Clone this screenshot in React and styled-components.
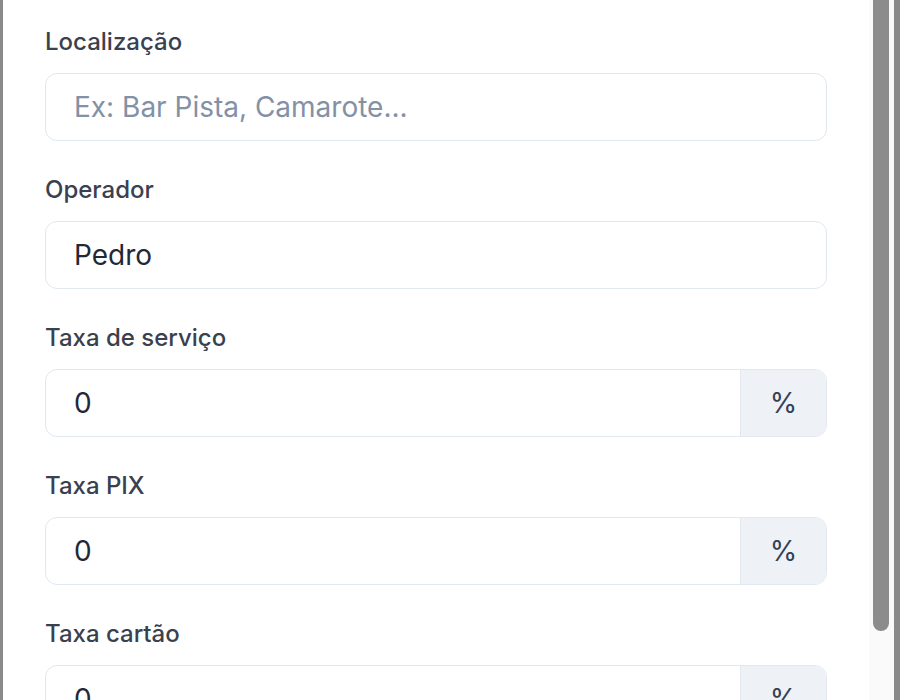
import React from 'react'
import styled, { createGlobalStyle } from 'styled-components'

const GlobalStyle = createGlobalStyle`
  * {
    box-sizing: border-box;
  }

  html,
  body {
    margin: 0;
    height: 100%;
    background: #8a8a8a;
    font-family: Inter, 'Noto Sans', sans-serif;
  }

  #root {
    height: 100%;
  }
`

const fields = [
  { label: 'Localização', placeholder: 'Ex: Bar Pista, Camarote...' },
  { label: 'Operador', value: 'Pedro' },
  { label: 'Taxa de serviço', value: '0', suffix: '%' },
  { label: 'Taxa PIX', value: '0', suffix: '%' },
  { label: 'Taxa cartão', value: '0', suffix: '%' }
]

export default function App() {
  return (
    <>
      <GlobalStyle />
      <Backdrop>
        <Modal>
          <Content>
            <Form onSubmit={(e) => e.preventDefault()}>
              {fields.map((field) => (
                <Field key={field.label}>
                  <Label>{field.label}</Label>
                  <InputGroup>
                    <Input
                      type="text"
                      defaultValue={field.value}
                      placeholder={field.placeholder}
                    />
                    {field.suffix && <Suffix>{field.suffix}</Suffix>}
                  </InputGroup>
                </Field>
              ))}
            </Form>
          </Content>
          {/* scrollbar of the modal body, drawn since headless hides it */}
          <ScrollTrack>
            <ScrollThumb />
          </ScrollTrack>
        </Modal>
      </Backdrop>
    </>
  )
}

const Backdrop = styled.div`
  display: flex;
  height: 100%;
  padding-left: 3px;
`

const Modal = styled.div`
  display: flex;
  width: 891px;
  height: 700px;
  background: #ffffff;
  overflow: hidden;
`

const Content = styled.div`
  flex: 1;
  min-width: 0;
  height: 100%;
  overflow: hidden;
  padding: 0 42px;
`

const ScrollTrack = styled.div`
  width: 25px;
  height: 100%;
  padding: 0 5px 0 4px;
  background: #fafafa;
`

const ScrollThumb = styled.div`
  height: 631px;
  background: #8c8c8c;
  border-radius: 0 0 8px 8px;
`

const Form = styled.form`
  display: flex;
  flex-direction: column;
  gap: 34px;
  padding: 27px 0 44px;
`

const Field = styled.div`
  display: flex;
  flex-direction: column;
  gap: 16px;
`

const Label = styled.label`
  font-size: 24px;
  line-height: 30px;
  font-weight: 500;
  color: #3a414e;
`

const InputGroup = styled.div`
  display: flex;
  flex-shrink: 0;
  height: 68px;
  border: 1.5px solid #e2e8f0;
  border-radius: 12px;
  overflow: hidden;
  background: #ffffff;
`

const Input = styled.input`
  flex: 1;
  min-width: 0;
  border: none;
  outline: none;
  padding: 0 28px;
  font-family: Inter, 'Noto Sans', sans-serif;
  font-size: 28px;
  color: #1f2937;
  background: transparent;

  &::placeholder {
    color: #8391a6;
  }
`

const Suffix = styled.span`
  display: flex;
  align-items: center;
  justify-content: center;
  width: 86px;
  border-left: 1.5px solid #e2e8f0;
  background: #eef2f6;
  font-size: 28px;
  color: #334155;
`
